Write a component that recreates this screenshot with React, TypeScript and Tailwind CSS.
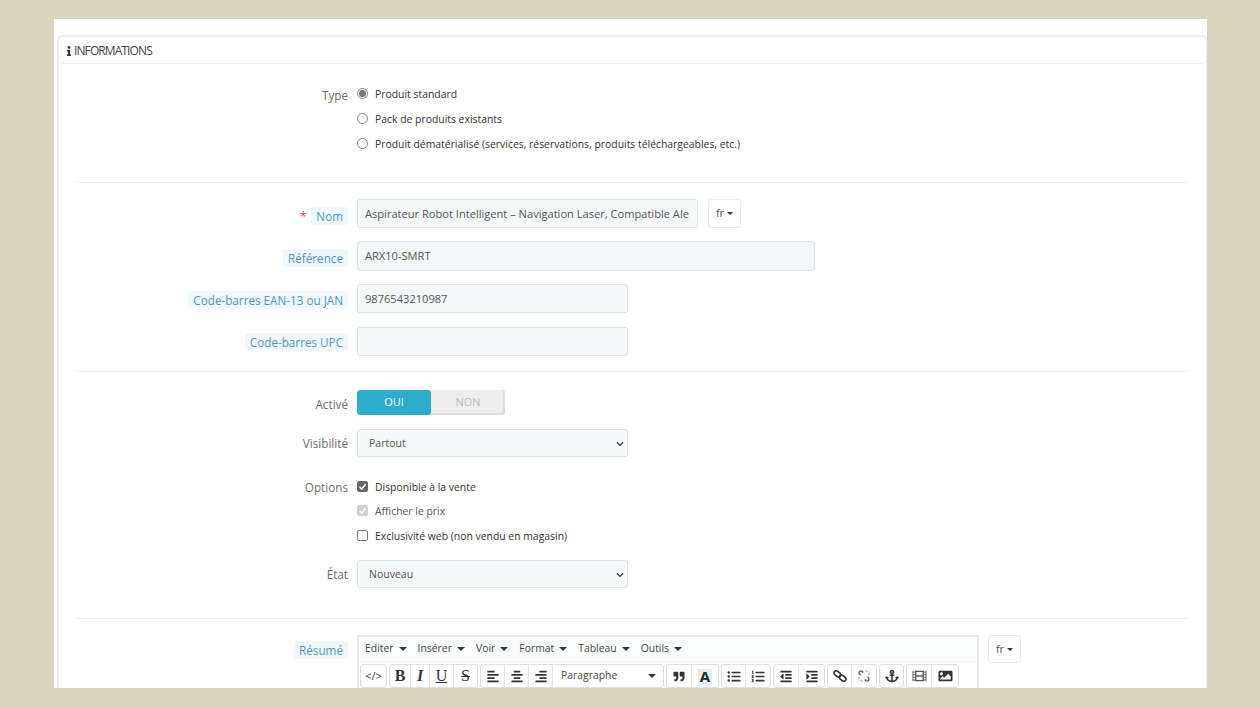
import { ReactNode } from 'react';
import {
  FaAlignCenter,
  FaAlignLeft,
  FaAlignRight,
  FaAnchor,
  FaChevronDown,
  FaFilm,
  FaImage,
  FaIndent,
  FaInfo,
  FaListOl,
  FaListUl,
  FaOutdent,
  FaQuoteRight,
} from 'react-icons/fa';

function Caret() {
  return <span className="inline-block border-x-[4px] border-t-[4px] border-x-transparent border-t-[#333]" />;
}

function Divider({ className = '' }: { className?: string }) {
  return <div className={`ml-[17px] mr-[17px] h-px bg-[#eeeeee] ${className}`} />;
}

function Hint({ children }: { children: ReactNode }) {
  return <span className="rounded-[3px] bg-[#eff8fc] px-[5px] py-[1px] text-[#5097bd]">{children}</span>;
}

function Row({ label, className = '', children }: { label: ReactNode; className?: string; children: ReactNode }) {
  return (
    <div className={`flex ${className}`}>
      <div className="w-[289px] shrink-0 text-right text-[11.7px] text-[#6e6e6e]">{label}</div>
      <div className="ml-[9px] min-w-0 flex-1">{children}</div>
    </div>
  );
}

function TextInput({ value, className = '' }: { value?: string; className?: string }) {
  return (
    <div className={`flex items-center overflow-hidden whitespace-nowrap rounded-[3px] border border-[#dbe6e9] bg-[#f5f8f9] px-[7px] pt-[1px] text-[11.1px] text-[#555] ${className}`}>
      {value}
    </div>
  );
}

function SelectBox({ value }: { value: string }) {
  return (
    <div className="flex h-[28px] w-[271px] items-center justify-between rounded-[3px] border border-[#dbe6e9] bg-[#f5f8f9] pl-[11px] pr-[3px] pt-[1px] text-[10.5px] text-[#555]">
      {value}
      <FaChevronDown className="h-[8px] w-[8px] text-[#333]" />
    </div>
  );
}

function LangButton({ className = '' }: { className?: string }) {
  return (
    <div className={`flex h-[28px] w-[33px] items-center justify-center gap-[3px] rounded-[3px] border border-[#e8ecee] bg-white text-[11px] text-[#555] ${className}`}>
      fr
      <span className="inline-block border-x-[3.5px] border-t-[3.5px] border-x-transparent border-t-[#333]" />
    </div>
  );
}

function Radio({ checked = false, label, className = '' }: { checked?: boolean; label: string; className?: string }) {
  return (
    <div className={`flex h-[18px] items-center ${className}`}>
      <span className="flex h-[11px] w-[11px] items-center justify-center rounded-full border border-[#888] bg-white">
        {checked && <span className="h-[7px] w-[7px] rounded-full bg-[#777]" />}
      </span>
      <span className="ml-[7px] pt-[3px] text-[10.4px] text-[#333]">{label}</span>
    </div>
  );
}

function Check({ state, label, className = '' }: { state: 'on' | 'disabled' | 'off'; label: string; className?: string }) {
  const box =
    state === 'on'
      ? 'bg-[#666] border-[#666]'
      : state === 'disabled'
        ? 'bg-[#cfcfcf] border-[#cfcfcf]'
        : 'bg-white border-[#777]';
  return (
    <div className={`flex h-[18px] items-center ${className}`}>
      <span className={`flex h-[11px] w-[11px] items-center justify-center rounded-[2px] border ${box}`}>
        {state !== 'off' && (
          <svg viewBox="0 0 12 12" className="h-[9px] w-[9px]" fill="none" stroke="white" strokeWidth="2">
            <path d="M2 6.5 5 9.5 10 3" />
          </svg>
        )}
      </span>
      <span className={`ml-[7px] pt-[3px] text-[10.4px] ${state === 'disabled' ? 'text-[#555]' : 'text-[#333]'}`}>{label}</span>
    </div>
  );
}

function LinkIcon() {
  return (
    <svg viewBox="0 0 14 14" className="h-[14px] w-[14px]" fill="none" stroke="#333" strokeWidth="1.7">
      <rect x="0.8" y="2.6" width="7" height="4.4" rx="2.2" transform="rotate(40 4.3 4.8)" />
      <rect x="6.2" y="7" width="7" height="4.4" rx="2.2" transform="rotate(40 9.7 9.2)" />
    </svg>
  );
}

function UnlinkIcon() {
  return (
    <svg viewBox="0 0 14 14" className="h-[14px] w-[14px]" fill="none" stroke="#555" strokeWidth="1.3">
      <path d="M6.4 3.4 5 2.2a2 2 0 0 0-2.8 2.6l1.2 1.4" />
      <path d="M7.6 10.6 9 11.8a2 2 0 0 0 2.8-2.6l-1.2-1.4" />
      <path d="M9 1v2M11.5 2 10 3.5M13 5h-2M1 9h2M2.5 12 4 10.5M5 13v-2" stroke="#999" strokeWidth="1" />
    </svg>
  );
}

function ToolGroup({ children }: { children: ReactNode }) {
  return <div className="flex h-[24px] shrink-0 divide-x divide-[#e6e6e6] rounded-[3px] border border-[#dfdfdf] bg-white">{children}</div>;
}

function Tool({ children, className = 'w-[24px]' }: { children: ReactNode; className?: string }) {
  return <div className={`flex items-center justify-center text-[#333] ${className}`}>{children}</div>;
}

const letter = 'font-["Liberation_Serif",serif] text-[16px] leading-none text-[#333]';
const icon = 'h-[13px] w-[14px]';

function Editor() {
  return (
    <div className="h-[70px] w-[622px] border-x-2 border-t-2 border-[#eaeaea] bg-white">
      <div className="flex h-[24px] items-center gap-[11px] bg-[#fbfcfe] pl-[6px] text-[10.4px] text-[#444]">
        {['Editer', 'Insérer', 'Voir', 'Format', 'Tableau', 'Outils'].map((item) => (
          <span key={item} className="flex items-center gap-[5px]">
            {item}
            <Caret />
          </span>
        ))}
      </div>
      <div className="flex gap-[2px] border-t border-[#f0f0f0] pl-[1px] pt-[2px]">
        <ToolGroup>
          <Tool className="w-[25px]">
            <span className="text-[11px]">&lt;/&gt;</span>
          </Tool>
        </ToolGroup>
        <ToolGroup>
          <Tool className="w-[21px]"><span className={`${letter} font-bold`}>B</span></Tool>
          <Tool className="w-[19px]"><span className={`${letter} font-bold italic`}>I</span></Tool>
          <Tool className="w-[24px]"><span className={`${letter} underline`}>U</span></Tool>
          <Tool className="w-[23px]"><span className={`${letter} line-through`}>S</span></Tool>
        </ToolGroup>
        <ToolGroup>
          <Tool><FaAlignLeft className={icon} /></Tool>
          <Tool><FaAlignCenter className={icon} /></Tool>
          <Tool><FaAlignRight className={icon} /></Tool>
          <div className="flex w-[110px] items-center justify-between pl-[8px] pr-[7px] text-[10.4px] text-[#444]">
            Paragraphe
            <Caret />
          </div>
        </ToolGroup>
        <ToolGroup>
          <Tool className="w-[25px]"><FaQuoteRight className="h-[11px] w-[12px]" /></Tool>
          <Tool className="w-[26px]">
            <span className="bg-[linear-gradient(135deg,#fde2e2,#e0f4e4,#e2e6fd)] px-[2px] text-[15px] font-bold leading-[15px] text-[#223]">A</span>
          </Tool>
        </ToolGroup>
        <ToolGroup>
          <Tool><FaListUl className={icon} /></Tool>
          <Tool><FaListOl className={icon} /></Tool>
        </ToolGroup>
        <ToolGroup>
          <Tool className="w-[25px]"><FaOutdent className={icon} /></Tool>
          <Tool className="w-[25px]"><FaIndent className={icon} /></Tool>
        </ToolGroup>
        <ToolGroup>
          <Tool><LinkIcon /></Tool>
          <Tool><UnlinkIcon /></Tool>
        </ToolGroup>
        <ToolGroup>
          <Tool className="w-[23px]"><FaAnchor className="h-[14px] w-[14px]" /></Tool>
        </ToolGroup>
        <ToolGroup>
          <Tool className="w-[25px]"><FaFilm className="h-[14px] w-[15px] text-[#555]" /></Tool>
          <Tool className="w-[26px]"><FaImage className="h-[14px] w-[15px]" /></Tool>
        </ToolGroup>
      </div>
    </div>
  );
}

export default function App() {
  return (
    <div className="h-[708px] w-[1260px] overflow-hidden bg-[#dad4bd] pb-[20px] pl-[54px] pr-[53px] pt-[19px] font-['Open_Sans',sans-serif]">
      <div className="h-full overflow-hidden bg-white pl-[3px] pt-[16px]">
        <div className="w-[1151px] rounded-t-[6px] border-l-2 border-t-2 border-r-2 border-[#eeeeee]">
          <div className="mx-[3px] flex h-[27px] items-center gap-[1px] border-b border-[#eeeeee] pl-[3px] pt-[2px] text-[12px] tracking-[-0.9px] text-[#444]">
            <FaInfo className="h-[10px] w-[8px] text-[#333]" />
            INFORMATIONS
          </div>

          <div className="pt-[20px]">
            <Row label={<span className="relative top-[3px]">Type</span>}>
              <Radio checked label="Produit standard" />
              <Radio label="Pack de produits existants" className="mt-[7px]" />
              <Radio label="Produit dématérialisé (services, réservations, produits téléchargeables, etc.)" className="mt-[7px]" />
            </Row>
            <Divider className="mt-[30px]" />

            <Row
              className="mt-[16px]"
              label={
                <span className="relative top-[9px]">
                  <span className="mr-[5px] text-[#e0404a]">*</span>
                  <Hint>Nom</Hint>
                </span>
              }
            >
              <div className="flex gap-[10px]">
                <TextInput className="h-[29px] w-[341px]" value="Aspirateur Robot Intelligent – Navigation Laser, Compatible Ale" />
                <LangButton className="h-[29px]" />
              </div>
            </Row>
            <Row className="mt-[13px]" label={<span className="relative top-[9px]"><Hint>Référence</Hint></span>}>
              <TextInput className="h-[30px] w-[458px]" value="ARX10-SMRT" />
            </Row>
            <Row className="mt-[13px]" label={<span className="relative top-[8px]"><Hint>Code-barres EAN-13 ou JAN</Hint></span>}>
              <TextInput className="h-[29px] w-[271px]" value="9876543210987" />
            </Row>
            <Row className="mt-[14px]" label={<span className="relative top-[7px]"><Hint>Code-barres UPC</Hint></span>}>
              <TextInput className="h-[29px] w-[271px]" />
            </Row>
            <Divider className="mt-[15px]" />

            <Row className="mt-[18px]" label={<span className="relative top-[6px]">Activé</span>}>
              <div className="flex h-[25px] w-[148px] overflow-hidden rounded-[3px] bg-[#eeeeee] text-[11px] shadow-[inset_-2px_-2px_1px_#dcdcdc]">
                <div className="flex w-[74px] items-center justify-center rounded-[3px] bg-[#2eacce] text-white">OUI</div>
                <div className="flex flex-1 items-center justify-center text-[#bbbbbb]">NON</div>
              </div>
            </Row>
            <Row className="mt-[14px]" label={<span className="relative top-[6px]">Visibilité</span>}>
              <SelectBox value="Partout" />
            </Row>
            <Row className="mt-[20px]" label={<span className="relative top-[2px]">Options</span>}>
              <Check state="on" label="Disponible à la vente" />
              <Check state="disabled" label="Afficher le prix" className="mt-[6px]" />
              <Check state="off" label="Exclusivité web (non vendu en magasin)" className="mt-[7px]" />
            </Row>
            <Row className="mt-[16px]" label={<span className="relative top-[6px]">État</span>}>
              <SelectBox value="Nouveau" />
            </Row>
            <Divider className="mt-[30px]" />

            <Row className="mt-[16px]" label={<span className="relative top-[7px]"><Hint>Résumé</Hint></span>}>
              <div className="flex gap-[9px]">
                <Editor />
                <LangButton />
              </div>
            </Row>
          </div>
        </div>
      </div>
    </div>
  );
}
